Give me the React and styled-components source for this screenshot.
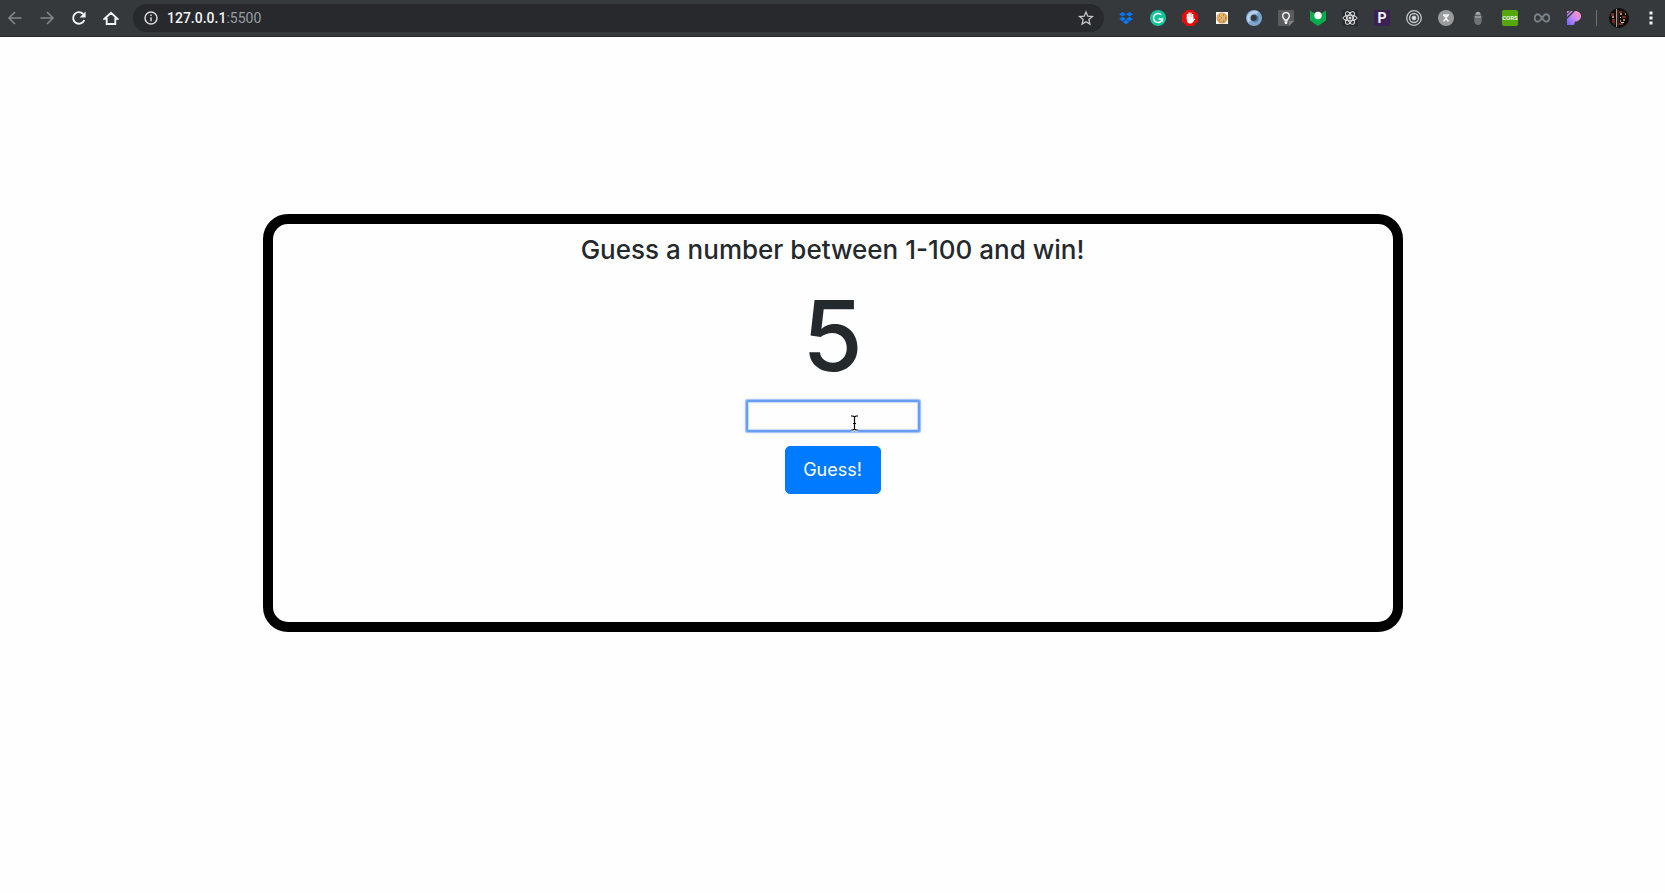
import React, { useState } from "react";
import styled, { createGlobalStyle } from "styled-components";

const GlobalStyle = createGlobalStyle`
  *, *::before, *::after { box-sizing: border-box; }
  body {
    margin: 0;
    background: #fefefe;
    color: #24292d;
    font-family: Inter, "Liberation Sans", sans-serif;
    font-size: 16px;
  }
`;

const Toolbar = styled.header`
  display: flex;
  align-items: center;
  height: 37px;
  padding: 0 6px 1px 7px;
  background: #35393c;
  border-bottom: 1px solid #27292c;
`;

const IconRow = styled.nav`
  display: flex;
  align-items: center;
  gap: 16px;
`;

const IconButton = styled.button`
  display: flex;
  align-items: center;
  justify-content: center;
  flex: none;
  width: 16px;
  height: 16px;
  padding: 0;
  border: 0;
  border-radius: ${(p) => p.$radius || 0}px;
  background: ${(p) => p.$bg || "none"};
  color: ${(p) => p.$color || "#f1f3f4"};
  font: 700 ${(p) => p.$size || 12}px / 16px Roboto, sans-serif;
  svg { display: block; flex: none; }
`;

const AddressBar = styled.div`
  display: flex;
  align-items: center;
  flex: 1;
  min-width: 0;
  height: 28px;
  margin: 0 14px;
  padding: 0 10px;
  border-radius: 14px;
  background: #27292d;
`;

const Url = styled.a`
  flex: 1;
  margin-left: 8px;
  color: #f1f3f4;
  font: 500 14px/20px Roboto, sans-serif;
  text-decoration: none;
`;

const Port = styled.span`
  color: #9a9da1;
  font-weight: 400;
`;

const Divider = styled.span`
  width: 1px;
  height: 16px;
  margin: 0 12px 0 14px;
  background: #6c7074;
`;

const Avatar = styled.button`
  width: 20px;
  height: 20px;
  margin-right: 14px;
  padding: 0;
  border: 0;
  border-radius: 10px;
  overflow: hidden;
  background: #120c0b;
  svg { display: block; }
`;

const Game = styled.main`
  width: calc(100% - 32px);
  max-width: 1140px;
  min-height: 418px;
  margin: 177px auto 0;
  padding: 9px 16px;
  border: 10px solid #000;
  border-radius: 25px;
`;

const GuessForm = styled.form`
  display: flex;
  flex-direction: column;
  align-items: center;
`;

const Title = styled.h1`
  margin: 0;
  font-size: 26px;
  line-height: 34px;
  font-weight: 500;
  text-align: center;
`;

const Attempts = styled.output`
  margin-top: 7px;
  font-size: 98px;
  line-height: 124px;
  font-weight: 500;
`;

const Field = styled.div`
  position: relative;
  margin-top: 2px;
`;

const NumberInput = styled.input`
  display: block;
  width: 174px;
  height: 32px;
  padding: 2px 4px;
  border: 2px solid #689df6;
  border-radius: 2px;
  outline: none;
  background: #fefefe;
  box-shadow: 0 0 0 1px #a5c5fa, 0 0 2px 1px #c4d9fb, inset 0 0 1px 1px #c4d9fb;
  font: inherit;
`;

const TextCursor = styled.svg`
  position: absolute;
  top: 14px;
  left: 103px;
  pointer-events: none;
`;

const GuessButton = styled.button`
  min-width: 96px;
  height: 48px;
  margin-top: 14px;
  padding: 8px 16px;
  border: 1px solid #007bff;
  border-radius: 5px;
  background: #007bff;
  color: #fff;
  font-family: inherit;
  font-size: 18px;
  line-height: 30px;
  cursor: pointer;
`;

function Icon({ children, size = 16, ...rest }) {
  return (
    <svg width={size} height={size} viewBox="0 0 16 16" fill="none" aria-hidden="true" {...rest}>
      {children}
    </svg>
  );
}

const navigation = [
  { label: "Back", color: "#85888b", art: <path d="M14.5 8H2M8 2 2 8l6 6" stroke="currentColor" strokeWidth="1.6" /> },
  { label: "Forward", color: "#85888b", art: <path d="M1.500 8H14M8 2l6 6-6 6" stroke="currentColor" strokeWidth="1.6" /> },
  {
    label: "Reload",
    art: (
      <>
        <path d="M13.300 10.200A5.800 5.800 0 1 1 12.200 4" stroke="currentColor" strokeWidth="1.900" />
        <path d="M14.600 1.500v6H8.600z" fill="currentColor" />
      </>
    ),
  },
  { label: "Home", art: <path d="M1.500 8.800 8 2.800l6.500 6H12.300V14H3.700V8.800z" stroke="currentColor" strokeWidth="1.900" /> },
];

const extensions = [
  {
    label: "Dropbox",
    art: <path fill="#0878f8" d="M4.500 2 8 4.300 4.500 6.600 1 4.300zM11.500 2 15 4.300l-3.500 2.300L8 4.300zM4.500 6.700 8 9l-3.500 2.300L1 9zM11.500 6.700 15 9l-3.500 2.300L8 9zM8 9.700l3.400 2.300L8 14.200 4.600 12z" />,
  },
  {
    label: "Grammarly",
    art: (
      <>
        <circle cx="8" cy="8" r="8" fill="#15c39a" />
        <path d="M11.200 4.800A4.500 4.500 0 1 0 12.400 9H8.500M12.400 8.600v3.200" stroke="#fff" strokeWidth="1.500" />
      </>
    ),
  },
  {
    label: "AdBlock",
    art: (
      <>
        <path d="M4.700 0h6.600L16 4.700v6.600L11.300 16H4.700L0 11.300V4.700z" fill="#e40d0d" />
        <path d="M5.500 9V4.500M7.200 8V3M8.900 8V3.200M10.600 9V4.700" stroke="#fff" strokeWidth="1.500" strokeLinecap="round" />
        <path d="M4.800 7h6.500v2.500l1-1 .8.700-2.600 3.600c-1.200 1.100-4 1-5-.6-.6-1-.7-2-.7-5.200z" fill="#fff" />
      </>
    ),
  },
  {
    label: "Cookie editor",
    art: (
      <>
        <path fill="#fff" d="M2 2h12v12H2z" />
        <circle cx="8" cy="8" r="5.500" fill="#d49a50" />
        <circle cx="7.500" cy="7.300" r="4.200" fill="#e3b36c" />
        <path d="M5 6h1M9 5h1M7 8h1M11 8h1M5 10h1M9 11h1" stroke="#915b28" strokeWidth="1" />
      </>
    ),
  },
  {
    label: "JSON viewer",
    art: (
      <>
        <circle cx="8" cy="8" r="5.600" stroke="#7fa5cd" strokeWidth="4.800" />
        <path d="M3.600 11.600A5.600 5.600 0 0 1 5 3.400c2-1.600 5-1.500 6.500-.4" stroke="#b6cfe8" strokeWidth="3" />
        <path d="M8 11.500c3 .4 4.500-2 3.500-5.500" stroke="#4f7eae" strokeWidth="2" />
      </>
    ),
  },
  {
    label: "Lighthouse tips",
    art: (
      <>
        <path fill="#5b5c5d" d="M1 0h14a1 1 0 0 1 1 1v10l-5 5H1a1 1 0 0 1-1-1V1a1 1 0 0 1 1-1z" />
        <path fill="#808284" d="M16 11l-5 5v-4a1 1 0 0 1 1-1z" />
        <path d="M6.500 10C6.500 8.500 4.700 8.300 4.700 6a3.300 3.300 0 0 1 6.600 0C11.300 8.300 9.500 8.500 9.500 10zM6.500 12h3M7 13.300h2" stroke="#fff" strokeWidth="1.300" />
      </>
    ),
  },
  {
    label: "Privacy shield",
    art: (
      <>
        <path fill="#07ad4d" d="m0 .5 8 5 8-5v10L8 16 0 10.500z" />
        <circle cx="8" cy="5.500" r="3.700" fill="#fff" />
      </>
    ),
  },
  {
    label: "React developer tools",
    bg: "#282c31",
    art: (
      <g stroke="#e5e5e5" strokeWidth="1">
        <ellipse cx="8" cy="8" rx="7" ry="2.800" />
        <ellipse cx="8" cy="8" rx="7" ry="2.800" transform="rotate(60 8 8)" />
        <ellipse cx="8" cy="8" rx="7" ry="2.800" transform="rotate(120 8 8)" />
        <circle cx="8" cy="8" r="1" fill="#e5e5e5" />
      </g>
    ),
  },
  { label: "Pesticide", bg: "#3b2054", size: 14, text: "P" },
  {
    label: "Tor",
    art: (
      <g stroke="#c3c5c7">
        <circle cx="8" cy="8" r="7.300" strokeWidth="1.300" />
        <circle cx="8" cy="8" r="4.500" strokeWidth="1.400" />
        <circle cx="8" cy="8" r="2" fill="#e0e1e2" />
      </g>
    ),
  },
  {
    label: "Session timer",
    art: (
      <>
        <circle cx="8" cy="8" r="8" fill="#999b9d" />
        <path d="M5 5h6M5.500 11.500 8 8.500l2.500 3M6 5.500l2 2 2-2M8 7v2" stroke="#f5f5f5" strokeWidth="1.500" />
      </>
    ),
  },
  {
    label: "Bug inspector",
    art: (
      <>
        <path d="M5.300 4.700C5.400.8 10.600.8 10.700 4.700z" fill="#a9abad" />
        <path d="M4.500 5.500h7v2.500h-7z" fill="#919395" />
        <path d="M4.300 8h7.400v3.500c0 4.500-7.400 4.500-7.400 0z" fill="#707375" />
        <path d="m2.500 6 2 1M13.500 6l-2 1" stroke="#4a4d50" />
      </>
    ),
  },
  { label: "CORS", bg: "#54a80b", radius: 2, size: 6, text: "CORS" },
  {
    label: "Infinity",
    art: <path d="M8 8C6.200 5.500 5.300 4.300 3.900 4.300a3.300 3.700 0 0 0 0 7.400C5.300 11.700 6.200 10.500 8 8s2.700-3.700 4.100-3.700a3.300 3.700 0 0 1 0 7.400C10.700 11.700 9.800 10.500 8 8z" stroke="#78828b" strokeWidth="2" />,
  },
  {
    label: "Pastel",
    art: (
      <>
        <defs>
          <linearGradient id="pastel" x1="2" y1="14" x2="14" y2="2" gradientUnits="userSpaceOnUse">
            <stop stopColor="#7868fb" />
            <stop offset=".5" stopColor="#c98af2" />
            <stop offset="1" stopColor="#ff95bd" />
          </linearGradient>
        </defs>
        <path fill="url(#pastel)" d="M1 9 9 1c8 0 8 10.500 0 10.500L8 15H1zM1 7V5l4-4h2zM1 3.800V1h2.800z" />
      </>
    ),
  },
];

export default function App() {
  const [guess, setGuess] = useState("");

  return (
    <>
      <GlobalStyle />
      <Toolbar>
        <IconRow aria-label="Navigation">
          {navigation.map((item) => (
            <IconButton key={item.label} type="button" aria-label={item.label} $color={item.color}>
              <Icon>{item.art}</Icon>
            </IconButton>
          ))}
        </IconRow>
        <AddressBar>
          <Icon>
            <circle cx="8" cy="8" r="6" stroke="#d5d7d9" strokeWidth="1.500" />
            <path d="M8 7.200v4M8 4.500v1.600" stroke="#d5d7d9" strokeWidth="1.500" />
          </Icon>
          <Url href="http://127.0.0.1:5500">
            127.0.0.1<Port>:5500</Port>
          </Url>
          <IconButton type="button" aria-label="Bookmark this page" $color="#c6c9cc">
            <Icon>
              <path d="m8 2 1.800 4.200 4.600.4-3.500 3 1 4.500L8 11.700l-3.900 2.400 1-4.500-3.500-3 4.600-.4z" stroke="currentColor" strokeWidth="1.300" />
            </Icon>
          </IconButton>
        </AddressBar>
        <IconRow aria-label="Extensions">
          {extensions.map((item) => (
            <IconButton
              key={item.label}
              type="button"
              aria-label={item.label}
              $bg={item.bg}
              $radius={item.radius}
              $size={item.size}
            >
              {item.text || <Icon>{item.art}</Icon>}
            </IconButton>
          ))}
        </IconRow>
        <Divider />
        <Avatar type="button" aria-label="Profile">
          <svg width="20" height="20" viewBox="0 0 20 20" aria-hidden="true">
            <path fill="#722f1c" d="M2 5h3v3H2zM3 11h3v4H3zM10 3h3v2h-3zM13 8h4v2h-4zM10 15h4v2h-4z" />
            <path fill="#b8875f" d="M3 8h2v2H3zM11 5h2v2h-2zM14 11h2v2h-2zM11 12h1v2h-1zM16 5h1v2h-1z" />
            <path fill="#a39b93" d="M7 1h1v18H7z" />
            <path fill="#ddd5cb" d="M12 14h3v1h-3zM11 9h1v1h-1z" />
            <path fill="#30231f" d="M8 2h2v16H8zM14 3h2v2h-2zM4 15h2v2H4z" />
          </svg>
        </Avatar>
        <IconButton type="button" aria-label="Browser menu">
          <Icon>
            <path fill="currentColor" d="M6.500 1.500h3v3h-3zM6.500 6.500h3v3h-3zM6.500 11.500h3v3h-3z" />
          </Icon>
        </IconButton>
      </Toolbar>

      <Game>
        <GuessForm onSubmit={(event) => event.preventDefault()}>
          <Title>Guess a number between 1-100 and win!</Title>
          <Attempts aria-label="Attempts left">5</Attempts>
          <Field>
            <NumberInput
              aria-label="Your guess"
              inputMode="numeric"
              value={guess}
              onChange={(event) => setGuess(event.target.value)}
            />
            <TextCursor width="11" height="18" viewBox="0 0 11 18" fill="none" aria-hidden="true">
              <path d="M2 2h2l1.500 1L7 2h2M5.500 3v12M2 16h2l1.500-1L7 16h2M4 9.500h3" stroke="#fff" strokeWidth="3" />
              <path d="M2 2h2l1.500 1L7 2h2M5.500 3v12M2 16h2l1.500-1L7 16h2M4 9.500h3" stroke="#000" strokeWidth="1.200" />
            </TextCursor>
          </Field>
          <GuessButton type="submit">Guess!</GuessButton>
        </GuessForm>
      </Game>
    </>
  );
}
